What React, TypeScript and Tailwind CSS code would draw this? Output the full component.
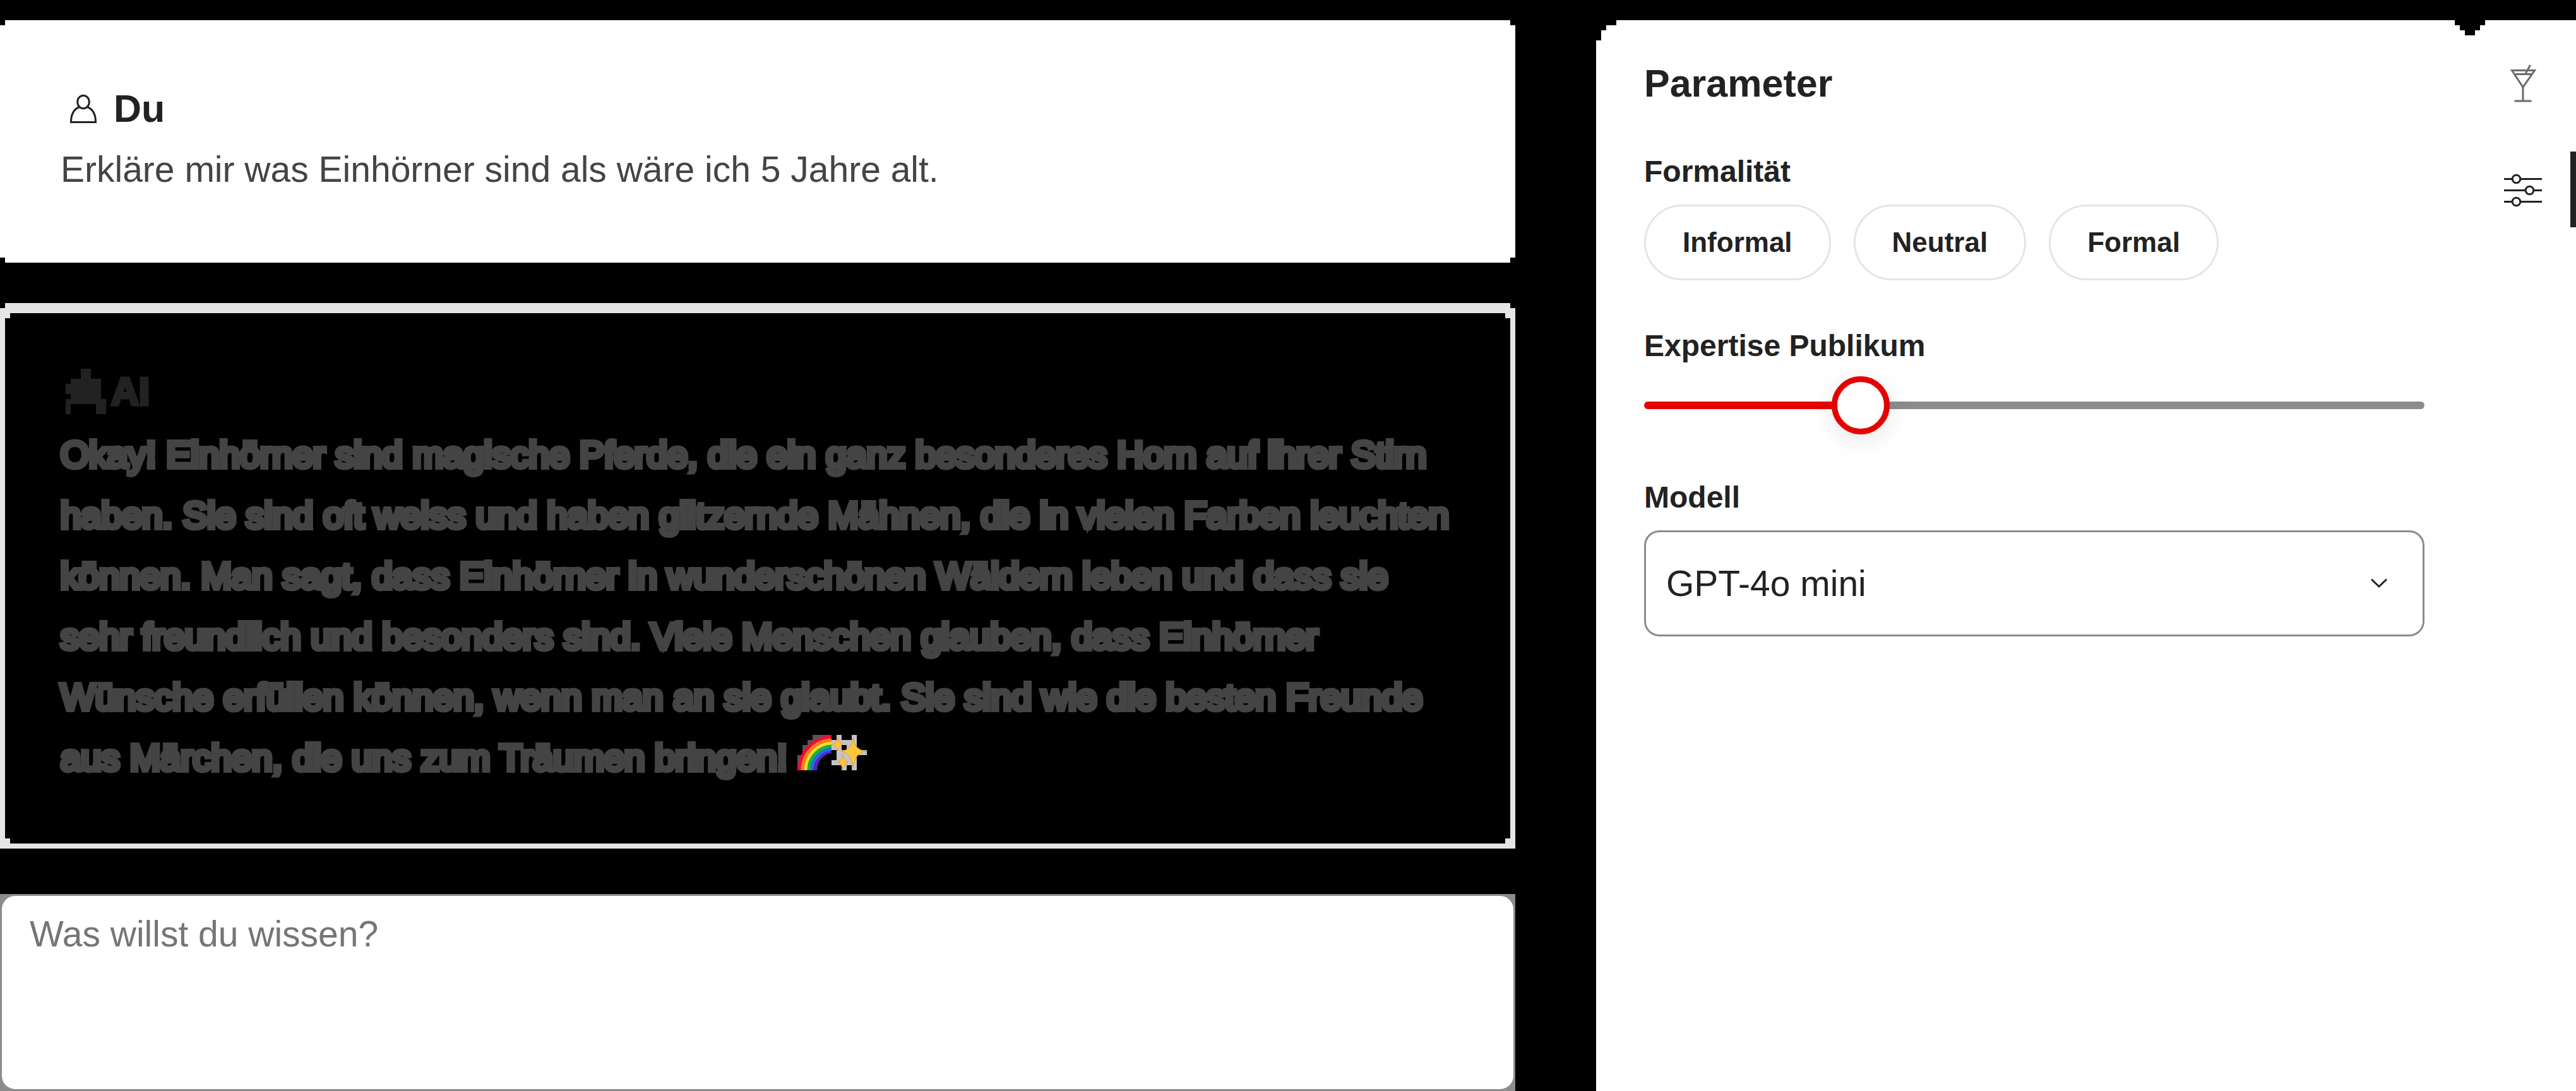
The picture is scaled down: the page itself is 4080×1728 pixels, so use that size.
import { useState } from "react";

const notchedCard =
  "[clip-path:polygon(8px_0,calc(100%-8px)_0,calc(100%-8px)_8px,100%_8px,100%_calc(100%-8px),calc(100%-8px)_calc(100%-8px),calc(100%-8px)_100%,8px_100%,8px_calc(100%-8px),0_calc(100%-8px),0_8px,8px_8px)]";

function UserIcon() {
  return (
    <svg viewBox="0 0 72 72" className="size-[72px]" fill="none" stroke="currentColor" strokeWidth="3" aria-hidden="true">
      <ellipse cx="36" cy="25.500" rx="9.300" ry="10.300" />
      <path d="M29.500 33.500C21 37 16.500 46 16.500 57.500H55.500C55.500 46 51 37 42.500 33.500" />
    </svg>
  );
}

function RobotIcon() {
  return (
    <svg viewBox="0 0 72 72" className="size-[72px]" fill="currentColor" aria-hidden="true">
      <path d="M32 0H48V16H64V48H72V72H56V56H16V72H8V48H16V40H8V24H16V16H32Z" />
    </svg>
  );
}

function CocktailIcon() {
  return (
    <svg viewBox="0 0 72 72" className="size-[72px]" fill="none" stroke="currentColor" strokeWidth="3" aria-hidden="true">
      <path d="M18.500 15.500H54.500L36 42Z" />
      <path d="M24 21.500H50M36 41V64M22.500 64H49.500M40 21L47.500 7" />
    </svg>
  );
}

function SlidersIcon() {
  return (
    <svg viewBox="0 0 72 72" className="size-[72px]" fill="none" stroke="currentColor" strokeWidth="3" aria-hidden="true">
      <path d="M6 19.500H19M32 19.500H66M6 37.500H40M53 37.500H66M6 55.500H19M32 55.500H66" />
      <circle cx="25.500" cy="19.500" r="6.300" />
      <circle cx="46.500" cy="37.500" r="6.300" />
      <circle cx="25.500" cy="55.500" r="6.300" />
    </svg>
  );
}

function Rainbow() {
  const bands = ["#f5093a", "#ff7a12", "#ffd83a", "#18b52c", "#1c6df0", "#5a1fc0"];
  return (
    <svg viewBox="0 0 54 56" className="inline-block h-14 w-[54px] align-baseline" fill="none" strokeWidth="5" role="img" aria-label="Regenbogen">
      <path d="M0 56V32H8V16H16V8H24V0H54V24L32 56Z" fill="#555" />
      {bands.map((color, i) => (
        <path key={color} d={`M${3 + i * 5} 56A${53 - i * 5} ${53 - i * 5} 0 0 1 54 ${3 + i * 5}`} stroke={color} />
      ))}
      <path d="M31 56A25 27 0 0 1 54 29V56Z" fill="#000" />
    </svg>
  );
}

function Sparkles() {
  return (
    <svg viewBox="0 0 56 56" className="inline-block size-14 align-baseline" role="img" aria-label="Funkeln">
      <path d="M8 0H16V8H32V0H40V24H56V32H40V56H32V48H24V56H16V48H0V40H8V24H0V8H8Z" fill="#c4c4c4" />
      <path d="M16 16H24V24H16Z" fill="#000" />
      <g fill="#ffc63a" stroke="#f09a35" strokeWidth="1">
        <path d="M34 3Q35 24 55 26Q36 28 34 53Q32 28 15 26Q33 24 34 3Z" />
        <path d="M10 3Q11 13 18 15Q12 17 10 26Q8 17 1 15Q9 13 10 3Z" />
        <path d="M18 31Q19 41 26 43Q20 45 18 55Q16 45 10 43Q17 41 18 31Z" />
      </g>
    </svg>
  );
}

function Conversation() {
  return (
    <main className="flex min-w-0 flex-col">
      <article className={`bg-white px-24 pt-24 pb-[100px] ${notchedCard}`}>
        <h2 className="flex items-center gap-3 text-[61px] leading-[88px] font-bold text-[#222]">
          <UserIcon />
          Du
        </h2>
        <p className="mt-1 text-[57px] leading-[96px] text-[#444]">
          Erkläre mir was Einhörner sind als wäre ich 5 Jahre alt.
        </p>
      </article>

      <article className="mt-16 bg-[#e5e5e5] px-2 pt-4 pb-2 [clip-path:polygon(8px_0,calc(100%-8px)_0,calc(100%-8px)_8px,100%_8px,100%_100%,0_100%,0_8px,8px_8px)]">
        <div className={`bg-black px-[88px] pt-20 pb-[88px] ${notchedCard}`}>
          <h2 className="flex items-center gap-2 text-[61px] leading-[88px] font-bold text-[#222] [-webkit-text-stroke:5px_#222]">
            <RobotIcon />
            AI
          </h2>
          <p className="mt-2 text-[58px] leading-[96px] text-[#444] [-webkit-text-stroke:8px_#444]">
            Okay! Einhörner sind magische Pferde, die ein ganz besonderes Horn auf ihrer Stirn haben. Sie sind oft weiss und
            haben glitzernde Mähnen, die in vielen Farben leuchten können. Man sagt, dass Einhörner in wunderschönen Wäldern
            leben und dass sie sehr freundlich und besonders sind. Viele Menschen glauben, dass Einhörner Wünsche erfüllen
            können, wenn man an sie glaubt. Sie sind wie die besten Freunde aus Märchen, die uns zum Träumen bringen!{" "}
            <Rainbow />
            <Sparkles />
          </p>
        </div>
      </article>

      <div className="mt-[72px] flex flex-1 bg-[#8c8c8c]">
        <textarea
          aria-label="Nachricht"
          placeholder="Was willst du wissen?"
          className="min-h-[312px] w-full resize-none rounded-3xl border-3 border-[#8c8c8c] bg-white px-11 py-6 text-[57px] leading-[72px] text-[#222] outline-none placeholder:text-[#757575]"
        />
      </div>
    </main>
  );
}

function Parameters() {
  const [formality, setFormality] = useState("");
  const [expertise, setExpertise] = useState(26);
  return (
    <section className="min-w-0 flex-1 bg-white pt-16 pr-[72px] pl-[76px] [clip-path:polygon(32px_0,calc(100%-24px)_0,calc(100%-24px)_8px,calc(100%-16px)_8px,calc(100%-16px)_16px,calc(100%-8px)_16px,calc(100%-8px)_24px,100%_24px,100%_100%,0_100%,0_32px,8px_32px,8px_16px,16px_16px,16px_8px,32px_8px)]">
      <h1 className="text-[61px] leading-[72px] font-bold text-[#222]">Parameter</h1>

      <fieldset className="mt-[72px]">
        <legend className="text-[48px] leading-16 font-bold text-[#222]">Formalität</legend>
        <div className="mt-5 flex flex-wrap gap-9">
          {["Informal", "Neutral", "Formal"].map((label) => (
            <button
              key={label}
              type="button"
              aria-pressed={formality === label}
              onClick={() => setFormality(label)}
              className="h-[120px] rounded-full border-3 border-[#e5e5e5] px-[58px] text-[44px] leading-16 font-bold text-[#222] aria-pressed:border-[#222]"
            >
              {label}
            </button>
          ))}
        </div>
      </fieldset>

      <div className="mt-[72px]">
        <label htmlFor="expertise" className="block text-[48px] leading-16 font-bold text-[#222]">
          Expertise Publikum
        </label>
        <input
          id="expertise"
          type="range"
          value={expertise}
          onChange={(event) => setExpertise(Number(event.target.value))}
          style={{ backgroundImage: `linear-gradient(to right, #e60000 ${expertise}%, #8c8c8c ${expertise}%)` }}
          className="mt-14 block h-3 w-full appearance-none rounded-full [&::-webkit-slider-thumb]:size-[92px] [&::-webkit-slider-thumb]:appearance-none [&::-webkit-slider-thumb]:rounded-full [&::-webkit-slider-thumb]:border-[9px] [&::-webkit-slider-thumb]:border-[#e60000] [&::-webkit-slider-thumb]:bg-white [&::-webkit-slider-thumb]:shadow-[0_9px_36px_rgba(0,0,0,0.1)]"
        />
      </div>

      <div className="mt-[108px]">
        <label htmlFor="model" className="block text-[48px] leading-16 font-bold text-[#222]">
          Modell
        </label>
        <div className="mt-5 grid items-center">
          <select
            id="model"
            className="col-start-1 row-start-1 h-[168px] w-full appearance-none rounded-3xl border-3 border-[#8c8c8c] bg-white px-8 text-[57px] leading-[72px] text-[#222]"
          >
            <option>GPT-4o mini</option>
          </select>
          <svg
            viewBox="0 0 28 16"
            className="pointer-events-none col-start-1 row-start-1 mr-[58px] h-4 w-7 justify-self-end"
            fill="none"
            stroke="#222"
            strokeWidth="3"
            aria-hidden="true"
          >
            <path d="M2 1.500L14 13L26 1.500" />
          </svg>
        </div>
      </div>
    </section>
  );
}

function Rail() {
  return (
    <nav
      aria-label="Werkzeuge"
      className="flex w-[168px] shrink-0 flex-col bg-white pt-10 [clip-path:polygon(24px_0,100%_0,100%_100%,0_100%,0_24px,8px_24px,8px_16px,16px_16px,16px_8px,24px_8px)]"
    >
      <button type="button" aria-label="Vorlagen" className="flex h-[120px] items-center justify-center text-[#6b6b6b]">
        <CocktailIcon />
      </button>
      <button
        type="button"
        aria-label="Parameter"
        className="mt-12 flex h-[120px] items-center justify-center border-r-9 border-[#222] pl-[9px] text-[#222]"
      >
        <SlidersIcon />
      </button>
    </nav>
  );
}

export default function App() {
  return (
    <div className="grid min-h-screen grid-cols-[minmax(0,150fr)_minmax(0,97fr)] gap-x-32 bg-black pt-8 font-['Liberation_Sans',Arial,sans-serif]">
      <Conversation />
      <aside className="flex min-w-0">
        <Parameters />
        <Rail />
      </aside>
    </div>
  );
}
